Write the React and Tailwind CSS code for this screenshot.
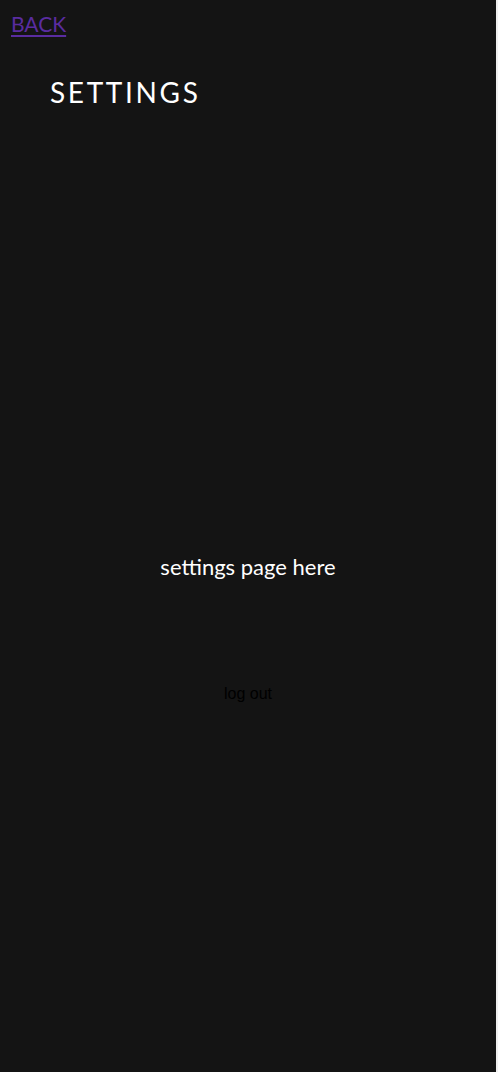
export default function App() {
  return (
    <div className="min-h-[1072px] w-full bg-[#f0f0f0]">
      <div className="w-[496px] h-[1072px] bg-[#141414] flex flex-col font-['Lato',sans-serif]">
        <a href="#" className="ml-[11px] mt-[10px] self-start text-[21px] leading-[28px] text-[#5a2ca0] underline underline-offset-[3px]">BACK</a>
        <h1 className="ml-[50px] mt-[36px] text-[28px] leading-[36px] tracking-[0.095em] text-white font-normal">SETTINGS</h1>
        <p className="mt-[443px] text-center text-[22px] leading-[28px] text-white">settings page here</p>
        <button className="mt-[103px] self-center text-[16px] leading-[20px] text-black bg-transparent font-['Liberation_Sans',sans-serif]">log out</button>
      </div>
    </div>
  );
}
